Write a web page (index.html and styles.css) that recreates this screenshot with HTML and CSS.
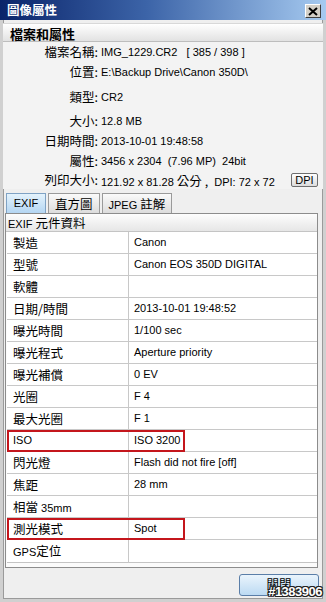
FILE: index.html
```html
<!DOCTYPE html>
<html lang="zh-Hant">
<head>
    <meta charset="UTF-8">
    <meta name="viewport" content="width=device-width, initial-scale=1.0">
    <title>圖像屬性</title>
    <link rel="stylesheet" href="styles.css">
</head>
<body>
    <div class="window">
        <!-- Title bar -->
        <div class="titlebar">
            <span class="title">圖像屬性</span>
            <span class="close-x">
                <svg width="10" height="9" viewBox="0 0 10 9"><path d="M1 1 L9 8 M9 1 L1 8" stroke="#000" stroke-width="2"/></svg>
            </span>
        </div>

        <div class="frame">
            <div class="section-head">檔案和屬性</div>

            <!-- File info -->
            <div class="info">
                <div class="info-row"><span class="label zh">檔案名稱:</span><span class="value">IMG_1229.CR2 &nbsp; [ 385 / 398 ]</span></div>
                <div class="info-row"><span class="label zh">位置:</span><span class="value">E:\Backup Drive\Canon 350D\</span></div>
                <div class="info-row gap"><span class="label zh">類型:</span><span class="value">CR2</span></div>
                <div class="info-row gap-sm"><span class="label zh">大小:</span><span class="value">12.8 MB</span></div>
                <div class="info-row"><span class="label zh">日期時間:</span><span class="value">2013-10-01 19:48:58</span></div>
                <div class="info-row"><span class="label zh">屬性:</span><span class="value">3456 x 2304 &nbsp;(7.96 MP) &nbsp;24bit</span></div>
                <div class="info-row last"><span class="label zh">列印大小:</span><span class="value">121.92 x 81.28 <span class="zh">公分 ,</span> &nbsp;DPI: 72 x 72</span><span class="dpi-btn">DPI</span></div>
            </div>

            <!-- Tabs -->
            <div class="tabs">
                <div class="tab active">EXIF</div>
                <div class="tab zh">直方圖</div>
                <div class="tab">JPEG <span class="zh">註解</span></div>
            </div>

            <div class="panel">
                <div class="panel-head">EXIF <span class="zh">元件資料</span></div>
                <div class="exif">
                    <div class="exif-row"><div class="k zh">製造</div><div class="v">Canon</div></div>
                    <div class="exif-row"><div class="k zh">型號</div><div class="v">Canon EOS 350D DIGITAL</div></div>
                    <div class="exif-row"><div class="k zh">軟體</div><div class="v"></div></div>
                    <div class="exif-row"><div class="k zh">日期/時間</div><div class="v">2013-10-01 19:48:52</div></div>
                    <div class="exif-row"><div class="k zh">曝光時間</div><div class="v">1/100 sec</div></div>
                    <div class="exif-row"><div class="k zh">曝光程式</div><div class="v">Aperture priority</div></div>
                    <div class="exif-row"><div class="k zh">曝光補償</div><div class="v">0 EV</div></div>
                    <div class="exif-row"><div class="k zh">光圈</div><div class="v">F 4</div></div>
                    <div class="exif-row"><div class="k zh">最大光圈</div><div class="v">F 1</div></div>
                    <div class="exif-row marked"><div class="k">ISO</div><div class="v">ISO 3200</div></div>
                    <div class="exif-row"><div class="k zh">閃光燈</div><div class="v">Flash did not fire [off]</div></div>
                    <div class="exif-row"><div class="k zh">焦距</div><div class="v">28 mm</div></div>
                    <div class="exif-row"><div class="k"><span class="zh">相當</span> 35mm</div><div class="v"></div></div>
                    <div class="exif-row marked"><div class="k zh">測光模式</div><div class="v">Spot</div></div>
                    <div class="exif-row"><div class="k">GPS<span class="zh">定位</span></div><div class="v"></div></div>
                </div>
            </div>

            <div class="footer">
                <div class="close-btn zh">關閉</div>
                <span class="watermark">#1383906</span>
            </div>
        </div>
    </div>
</body>
</html>
```

FILE: styles.css
```css
/* Base */
body {
    margin: 0;
    background: #d4d4d4;
    font-family: "Liberation Sans", "Noto Sans CJK TC", sans-serif;
    font-size: 11px;
    color: #000;
}

.zh {
    font-family: "Noto Sans CJK TC", sans-serif;
    font-size: 12.5px;
}

.window {
    width: 326px;
    height: 602px;
    display: flex;
    flex-direction: column;
    background: #efefef;
}

/* Title bar */
.titlebar {
    height: 20px;
    flex-shrink: 0;
    display: flex;
    align-items: center;
    justify-content: space-between;
    padding: 0 5px 0 7px;
    background: linear-gradient(to right, #0a246a, #3c64a8 45%, #a6caf0);
}

.title {
    color: #fff;
    font-family: "Noto Sans CJK TC", sans-serif;
    font-size: 12.5px;
    font-weight: bold;
    line-height: 20px;
}

.close-x {
    width: 16px;
    height: 14px;
    box-sizing: border-box;
    display: flex;
    align-items: center;
    justify-content: center;
    background: #d4d0c8;
    border: 1px solid;
    border-color: #fff #404040 #404040 #fff;
    margin-top: 2px;
}

/* Window frame */
.frame {
    flex: 1;
    display: flex;
    flex-direction: column;
    border: 3px solid #d0d0d0;
    border-top: 0;
    box-shadow: inset 1px 0 #9a9a9a, inset -1px 0 #9a9a9a, inset 0 -1px #9a9a9a;
}

.section-head {
    height: 19px;
    margin: 3px 0 0 0;
    padding-left: 7px;
    font-family: "Noto Sans CJK TC", sans-serif;
    font-size: 13px;
    font-weight: bold;
    line-height: 19px;
    background: linear-gradient(#ffffff, #e2e2e2);
    border-top: 1px solid #d8d8d8;
    border-bottom: 1px solid #bdbdbd;
    box-sizing: border-box;
}

/* Info rows */
.info {
    background: #f3f3f3;
}

.info-row {
    height: 20px;
    display: flex;
    align-items: center;
}

.info-row.gap {
    margin-top: 5px;
}

.info-row.gap-sm {
    margin-top: 4px;
}

.info-row.last {
    height: 18px;
}

.info-row .label {
    width: 95px;
    text-align: right;
    line-height: 20px;
}

.info-row .value {
    flex: 1;
    padding-left: 3px;
    white-space: nowrap;
}

.dpi-btn {
    width: 27px;
    height: 14px;
    box-sizing: border-box;
    margin-right: 5px;
    border: 1px solid #6e6e6e;
    border-radius: 2px;
    background: linear-gradient(#ffffff, #dcdcdc);
    font-size: 11px;
    line-height: 12px;
    text-align: center;
}

/* Tabs */
.tabs {
    display: flex;
    gap: 2px;
    margin: 4px 0 0 3px;
    height: 20px;
}

.tab {
    height: 20px;
    box-sizing: border-box;
    border: 1px solid #9a9a9a;
    border-bottom: 0;
    background: linear-gradient(#fafafa, #dcdcdc);
    line-height: 19px;
    text-align: center;
    padding: 0 6px;
}

.tab.active {
    width: 40px;
    padding: 0;
    background: linear-gradient(#e4f2fc, #b4d6f2);
    border-color: #7fa2c4;
}

.tab .zh {
    line-height: 19px;
}

/* Panel with EXIF table */
.panel {
    margin: 0 5px 0 2px;
    border: 1px solid #8c8c8c;
    background: #fbfbfb;
    padding-bottom: 4px;
}

.panel-head {
    height: 18px;
    box-sizing: border-box;
    padding-left: 2px;
    line-height: 17px;
    background: linear-gradient(#fdfdfd, #e6e6e6);
    border-bottom: 1px solid #c4c4c4;
}

.exif {
    margin-left: 1px;
    border-bottom: 1px solid #c4c4c4;
    background: #ffffff;
}

.exif-row {
    position: relative;
    display: grid;
    grid-template-columns: 122px 1fr;
    height: 22px;
    box-sizing: border-box;
    border-bottom: 1px solid #c8c8c8;
}

.exif-row:last-child {
    border-bottom: 0;
}

.exif-row .k,
.exif-row .v {
    line-height: 21px;
    white-space: nowrap;
}

.exif-row .k {
    padding-left: 6px;
    border-right: 1px solid #c8c8c8;
}

.exif-row .v {
    padding-left: 5px;
}

/* Red highlight boxes */
.exif-row.marked::after {
    content: "";
    position: absolute;
    left: 0;
    top: 0;
    width: 178px;
    height: 22px;
    box-sizing: border-box;
    border: 2px solid #c4161c;
}

/* Footer */
.footer {
    flex: 1;
    position: relative;
    display: flex;
    justify-content: flex-end;
    align-items: flex-start;
    padding: 6px 4px 0 0;
}

.close-btn {
    width: 80px;
    height: 22px;
    box-sizing: border-box;
    border: 1px solid #5a7ea8;
    border-radius: 3px;
    background: linear-gradient(#eaf4fc, #bcdaf2);
    text-align: center;
    line-height: 18px;
}

.watermark {
    position: absolute;
    right: 1px;
    bottom: 0;
    font-size: 13px;
    font-weight: bold;
    color: #fff;
    letter-spacing: -0.5px;
    text-shadow: 1px 0 #222, -1px 0 #222, 0 1px #222, 0 -1px #222, 1px 1px #222, -1px -1px #222, 1px -1px #222, -1px 1px #222;
}
```
